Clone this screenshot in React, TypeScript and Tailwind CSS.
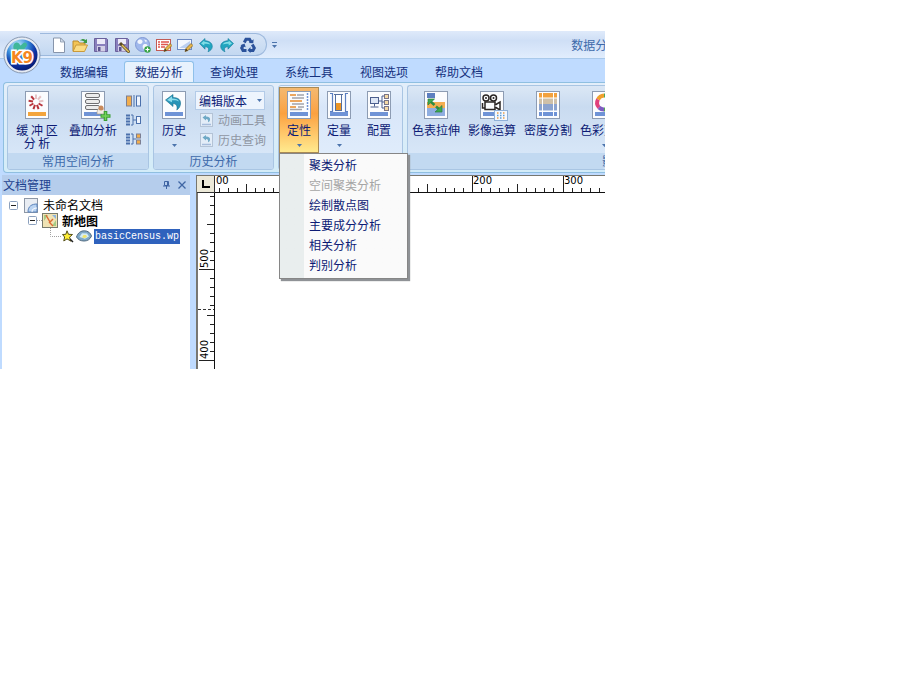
import React from 'react';

const tabs = ['数据编辑', '数据分析', '查询处理', '系统工具', '视图选项', '帮助文档'];

const menuItems = [
  { label: '聚类分析' },
  { label: '空间聚类分析', disabled: true },
  { label: '绘制散点图' },
  { label: '主要成分分析' },
  { label: '相关分析' },
  { label: '判别分析' },
];

/* ---------- quick access icons ---------- */

const FloppyShape = () => (
  <>
    <path d="M1.500 1.500h12l1 1v12h-13z" fill="#8a80bd" stroke="#6a619c" />
    <rect x="4" y="2" width="8" height="5" fill="#eceaf8" />
    <rect x="4" y="9" width="8" height="5.500" fill="#d3d0e6" />
    <rect x="5" y="10" width="2.500" height="4" fill="#5d5590" />
  </>
);

const Pencil = () => (
  <>
    <path d="M8 14.500l1-3 5-5 2 2-5 5z" fill="#e6b54a" stroke="#7b5b20" strokeWidth=".7" />
    <path d="M8 14.500l1-3 1.800 1.900z" fill="#4a3b20" />
  </>
);

const UndoShape = () => (
  <>
    <path
      d="M1.500 6.500L7 1.500v2.300c4.500 0 7.500 2.500 7.300 6-.2 2.300-1.800 4-4.300 5 1.300-2.800.5-5-3-5v2.400z"
      fill="#21a5bf"
      stroke="#157a9c"
      strokeWidth=".6"
    />
    <path d="M3 6.500l3.300-3v1.300c3.200 0 5 1 6 2.700-2-.8-4-1-6-.7v1.800z" fill="#7fdde6" />
  </>
);

const quickActions: { name: string; icon: React.ReactNode }[] = [
  {
    name: '新建',
    icon: (
      <>
        <path d="M2.500 1h7l4 4v10.500h-11z" fill="#fff" stroke="#8795ab" />
        <path d="M9.500 1v4h4z" fill="#d4deec" stroke="#8795ab" strokeWidth=".8" />
      </>
    ),
  },
  {
    name: '打开',
    icon: (
      <>
        <path d="M1 14V4h5l1.500 2H13v3" fill="#f3c455" stroke="#b98a2c" />
        <path d="M1 14.500l3-6.500h11.500l-3 6.500z" fill="#fbdc84" stroke="#c99a3c" />
        <path d="M8 3.500c2-2 4-2 5.500-.5l1.500-1v4h-4l1.300-1.200C11 3.600 9.800 3.500 8 3.500z" fill="#3d9a48" />
      </>
    ),
  },
  { name: '保存', icon: <FloppyShape /> },
  {
    name: '另存为',
    icon: (
      <>
        <FloppyShape />
        <path d="M6 6l9.500 9.500" stroke="#5b4a22" strokeWidth="3" />
        <path d="M8 8l7 7" stroke="#e2c25c" strokeWidth="1.500" />
      </>
    ),
  },
  {
    name: '网络',
    icon: (
      <>
        <circle cx="7.500" cy="7.500" r="7" fill="#a0b8ec" stroke="#8199d4" />
        <path d="M2.500 4c2-2.500 4.500-1.500 5 0s-1 3-2.500 3-3-1-2.500-3zm6 3.500c2-1 4 0 4 1s-2 4-3 4-3-3-1-5zM9 2.500l3 1-1 2z" fill="#f2f6fe" />
        <circle cx="12.500" cy="12.500" r="3.200" fill="#36a344" />
        <path d="M12.500 10.500v4M10.500 12.500h4" stroke="#fff" strokeWidth="1.200" />
      </>
    ),
  },
  {
    name: '编辑属性',
    icon: (
      <>
        <rect x=".5" y="2.500" width="14" height="11" fill="#fff" stroke="#c25b55" />
        <path d="M2 5h2m1 0h8M2 7.500h2m1 0h7M2 10h2m1 0h4" stroke="#e0564e" strokeWidth="1.500" />
        <Pencil />
      </>
    ),
  },
  {
    name: '编辑视图',
    icon: (
      <>
        <rect x=".5" y="2.500" width="14" height="10" fill="#f3f7fe" stroke="#6d8ac4" />
        <path d="M2 11l11-7v7z" fill="#bcd0f2" />
        <Pencil />
      </>
    ),
  },
  { name: '撤销', icon: <UndoShape /> },
  {
    name: '重做',
    icon: (
      <g transform="matrix(-1 0 0 1 16 0)">
        <UndoShape />
      </g>
    ),
  },
  {
    name: '刷新',
    icon: (
      <>
        <g fill="none" stroke="#2b529b" strokeWidth="3">
          <path d="M4.300 5.500L6 2.200h3.500l1.600 2.800" />
          <path d="M12.300 7.500l2 3.500-1.300 2.500H9.500" />
          <path d="M6.500 13.500H3L1.700 11l1.600-3" />
        </g>
        <path d="M8.800 6l4.500.2.300-4zM10.500 10v6l-3-2.800zM.5 8.500L4.500 6.500l1.200 3.800z" fill="#2b529b" />
      </>
    ),
  },
];

/* ---------- ribbon icons ---------- */

const FramedIcon: React.FC<{ children: React.ReactNode; bar?: string }> = ({ children, bar = '#6f93d6' }) => (
  <svg width="24" height="28" viewBox="0 0 24 28" className="shrink-0 overflow-visible" aria-hidden="true">
    <rect x=".5" y=".5" width="23" height="27" fill="#fbfcfe" stroke="#8d9cb3" />
    <rect x="3" y="21" width="18" height="4" fill={bar} />
    {children}
  </svg>
);

const spokes = [0, 40, 80, 120, 160, 200, 240, 280, 320];

const BufferIcon = () => (
  <FramedIcon bar="#f3a43c">
    {spokes.map((a, i) => (
      <path
        key={a}
        d="M11 8V3.500"
        transform={`rotate(${a} 11 11)`}
        stroke={i < 3 ? '#e6c3c5' : '#b8343c'}
        strokeWidth="2"
      />
    ))}
  </FramedIcon>
);

const OverlayIcon = () => (
  <FramedIcon>
    {[2, 8, 14].map((y) => (
      <rect key={y} x="4.500" y={y + 0.5} width="14" height="4" rx="1.500" fill="#ececec" stroke="#6f6f72" />
    ))}
    <path d="M16 23c0-4 1-6 4-6s4 2 4 6z" fill="#f1ece6" stroke="#a09080" strokeWidth=".6" />
    <circle cx="20" cy="17" r="2.500" fill="#c98a5c" />
    <path d="M24.500 20v10M19.500 25h10" stroke="#3a9e32" strokeWidth="3.600" />
    <path d="M24.500 21v8M20.500 25h8" stroke="#74d35c" strokeWidth="1.400" />
  </FramedIcon>
);

const HistoryIcon = () => (
  <FramedIcon>
    <path
      d="M3.500 9L11 3.500v3c5.500 0 8 2.800 7.500 6.500-.3 2.500-1.500 4.500-3.700 6 .9-3.800-.3-6.200-3.800-6.500v3z"
      fill="#2794b8"
      stroke="#17708f"
      strokeWidth=".6"
    />
    <path d="M5 9l5-3.700v2.200c4 0 6.300 1 7 3-2-1.200-4-1.500-7-1.200v2z" fill="#8bdcec" />
  </FramedIcon>
);

const QualitativeIcon = () => (
  <FramedIcon>
    <path d="M3 4h6M3 10h12M3 16h6" stroke="#e78a2c" strokeWidth="1.500" />
    <path d="M10 4h7M5 7h12M5 13h12M11 16h6M3 18.500h12" stroke="#a3a3aa" strokeWidth="1.500" />
    <path d="M20.500 2v18" stroke="#6f93d6" strokeWidth="1.500" strokeDasharray="2 1" />
  </FramedIcon>
);

const QuantitativeIcon = () => (
  <FramedIcon>
    <path d="M3 2.500h2.500v18H3M21 2.500h-2.500v18H21" stroke="#5b7fc0" strokeWidth="1.200" fill="none" />
    <rect x="8.500" y="3.500" width="6" height="16" fill="#fff" stroke="#56709f" />
    <rect x="9" y="12" width="5" height="7" fill="#eb9526" />
    <path d="M7 3.500h9" stroke="#56709f" />
  </FramedIcon>
);

const ConfigIcon = () => (
  <FramedIcon>
    <rect x="3.500" y="6.500" width="8" height="6" fill="#dde6f5" stroke="#4c5f8e" />
    <path d="M7.500 13v2.500M3.500 16h8M12 10h3M15 5v12M15 5h2M15 11h2M15 17h2" stroke="#4c5f8e" fill="none" />
    <rect x="17.500" y="3.500" width="4" height="4" fill="#f6d9a4" stroke="#7b7585" />
    <rect x="17.500" y="9.500" width="4" height="4" fill="#f6d9a4" stroke="#7b7585" />
    <rect x="17.500" y="15.500" width="4" height="4" fill="#f6d9a4" stroke="#7b7585" />
  </FramedIcon>
);

const StretchIcon = () => (
  <FramedIcon>
    <rect x="3" y="2" width="8" height="5" fill="#5c7fc0" />
    <rect x="3" y="11" width="18" height="6" fill="#f4ae52" />
    <rect x="3" y="17" width="18" height="8" fill="#8faee0" />
    <path d="M6.500 10.500l4 3.500M12 15.500l4 3.500" stroke="#2f8c43" strokeWidth="2.500" />
    <path d="M4 8h6.500L4 14zM18 14.500V21h-7z" fill="#3cab50" stroke="#2c7d3c" strokeWidth=".7" />
  </FramedIcon>
);

const ImageCalcIcon = () => (
  <FramedIcon>
    <g fill="#fbfcfe" stroke="#2b2624" strokeWidth="1.500">
      <circle cx="6" cy="7" r="3" />
      <circle cx="13.500" cy="7" r="3" />
      <rect x="5" y="11" width="10" height="7.500" />
      <path d="M15 14l5-3v8l-5-3" />
      <path d="M2.500 12v5H5" fill="none" />
    </g>
    <circle cx="6" cy="7" r="1" fill="#2b2624" />
    <circle cx="13.500" cy="7" r="1" fill="#2b2624" />
    <rect x="14.500" y="19.500" width="13" height="10" fill="#f5f9ff" stroke="#8fb0d8" />
    <path d="M17 22h1.500m4.500 0h1.500M17 27h1.500m4.500 0h1.500" stroke="#e9a04d" strokeWidth="1.500" />
    <path d="M20 22h1.500m-4.500 2.500h1.500m1.500 0h1.500m1.500 0h1.500M20 27h1.500" stroke="#5f9bd0" strokeWidth="1.500" />
  </FramedIcon>
);

const DensityIcon = () => (
  <FramedIcon>
    <rect x="3" y="2" width="18" height="5" fill="#f2a13d" />
    <rect x="3" y="7" width="18" height="6" fill="#cfc0a8" />
    <rect x="3" y="13" width="18" height="7" fill="#8ba3cf" />
    <path d="M6.500 2v23M17.500 2v23M3 7h18M3 20h18" stroke="#fff" />
  </FramedIcon>
);

const ColorIcon = () => (
  <FramedIcon>
    <path d="M12 4.500a7 7 0 0 0-6 4" stroke="#f0a02e" strokeWidth="4" fill="none" />
    <path d="M6 8.500a7 7 0 0 0 1 8" stroke="#e0407c" strokeWidth="4" fill="none" />
    <path d="M7 16.500a7 7 0 0 0 5 2" stroke="#7d5ac0" strokeWidth="4" fill="none" />
    <path d="M12 4.500a7 7 0 0 1 0 14" stroke="#4cab55" strokeWidth="4" fill="none" />
  </FramedIcon>
);

const SmallHistoryIcon = () => (
  <svg width="13" height="14" viewBox="0 0 13 14" className="shrink-0" aria-hidden="true">
    <rect x=".5" y=".5" width="12" height="13" fill="#e3edf8" stroke="#b4c3d6" />
    <path d="M2.500 4.500L6 2v1.500c3 0 4.500 1.500 4 3.500-.2 1.200-1 2-2 2.300.5-2 0-3.300-2-3.300v1.500z" fill="#6fa9c6" />
    <path d="M2 11.500h9" stroke="#a6bcdc" strokeWidth="1.500" />
  </svg>
);

const Caret: React.FC<{ className?: string }> = ({ className = '' }) => (
  <svg width="5" height="3" viewBox="0 0 5 3" className={`shrink-0 ${className}`} aria-hidden="true">
    <path d="M0 0h5L2.500 3z" fill="#4c74ac" />
  </svg>
);

/* ---------- ribbon pieces ---------- */

const RibbonButton: React.FC<{
  icon: React.ReactNode;
  label: React.ReactNode;
  caret?: boolean;
  active?: boolean;
  className?: string;
}> = ({ icon, label, caret, active, className = 'w-10' }) => (
  <button
    type="button"
    className={`flex h-full shrink-0 flex-col items-center border pt-[3px] leading-[13px] whitespace-nowrap ${
      active
        ? 'border-[#a98a55] bg-linear-to-b from-[#f4b970] via-[#fba13f] via-40% to-[#ffea8e]'
        : 'border-transparent'
    } ${className}`}
  >
    {icon}
    <span className="mt-1">{label}</span>
    {caret && <Caret className="mt-2" />}
  </button>
);

const RibbonGroup: React.FC<{
  title?: string;
  className: string;
  titleClass?: string;
  bodyClass?: string;
  children: React.ReactNode;
}> = ({
  title,
  className,
  titleClass = 'text-center bg-[#c2d9f1]',
  bodyClass = 'from-[#dbe7f5] via-[#c9dbf0] via-25% to-[#dceafa]',
  children,
}) => (
  <section className={`flex flex-col rounded-[3px] border border-[#a9c5e3] bg-linear-to-b pt-px ${bodyClass} ${className}`}>
    <div className="flex h-[66px]">{children}</div>
    <div className={`h-4 rounded-b-[2px] leading-4 whitespace-nowrap text-[#3e6aaa] ${titleClass}`}>
      {title && <h2>{title}</h2>}
    </div>
  </section>
);

/* ---------- rulers ---------- */

const UNIT = 9.05;

const HorizontalRuler = () => {
  // k = 0 is the "200" mark, measured from the left edge of the canvas
  const ticks = Array.from({ length: 110 }, (_, i) => i - 28);
  return (
    <svg width="100%" height="17" className="block" fontFamily="DejaVu Sans, sans-serif" fontSize="10">
      {ticks.map((k) => {
        const x = Math.round(257 + k * UNIT) + 0.5;
        const top = k % 10 === 0 ? 0 : k % 5 === 0 ? 8 : 12;
        return <path key={k} d={`M${x} ${top}V16`} stroke="#222" />;
      })}
      <text x="1" y="8">00</text>
      <text x="258" y="8">200</text>
      <text x="349" y="8">300</text>
      <rect y="16" width="100%" height="1" fill="#111" />
    </svg>
  );
};

const VerticalRuler = () => {
  const ticks = Array.from({ length: 19 }, (_, i) => i - 8);
  return (
    <svg width="18" height="176" className="block shrink-0" fontFamily="DejaVu Sans, sans-serif" fontSize="10">
      {ticks.map((k) => {
        const y = Math.round(76 + k * 9.1) + 0.5;
        const left = k % 10 === 0 ? 2 : k % 5 === 0 ? 10 : 13;
        return <path key={k} d={`M${left} ${y}H17`} stroke="#222" />;
      })}
      <path d="M1 116.500h16" stroke="#333" strokeDasharray="3 2" />
      <text transform="translate(11 75) rotate(-90)">500</text>
      <text transform="translate(11 166) rotate(-90)">400</text>
      <rect x="17" width="1" height="176" fill="#111" />
      <rect width="1" height="176" fill="#777" />
    </svg>
  );
};

const Collapse = () => (
  <svg width="9" height="9" viewBox="0 0 9 9" className="shrink-0" aria-hidden="true">
    <rect x=".5" y=".5" width="8" height="8" rx="1" fill="#fff" stroke="#8ba0bd" />
    <path d="M2 4.500h5" stroke="#222" />
  </svg>
);

const DocumentTree = () => (
  <ul className="flex-1 bg-white pt-0.5 text-black">
    <li>
      <div className="flex h-4 items-center pl-[7px]">
        <Collapse />
        <svg width="14" height="15" viewBox="0 0 14 15" className="ml-1.5 shrink-0" aria-hidden="true">
          <rect x=".5" y=".5" width="13" height="14" fill="#e9edf3" stroke="#8d97a6" />
          <path d="M4 14c0-6 4-8 9-8v8z" fill="#b9d3f2" stroke="#5b83bb" />
          <path d="M8 14c0-3 2-4 5-4" fill="none" stroke="#fff" />
        </svg>
        <span className="ml-[5px]">未命名文档</span>
      </div>
      <ul>
        <li>
          <div className="flex h-[15px] items-center pl-[26px] font-bold">
            <Collapse />
            <svg width="5" height="1" viewBox="0 0 5 1" className="shrink-0" aria-hidden="true">
              <path d="M0 .5h5" stroke="#a0a0a0" strokeDasharray="1 1" />
            </svg>
            <svg width="16" height="15" viewBox="0 0 16 15" className="shrink-0" aria-hidden="true">
              <rect x=".5" y=".5" width="15" height="14" fill="#f0e3b4" stroke="#777a6c" />
              <path d="M2 2h4l-4 6zM10 13l4-6v6z" fill="#a5cc85" />
              <path d="M4 2l4 7 3-3M7 9l4 4" stroke="#dc6b35" strokeWidth="1.400" fill="none" />
              <path d="M10 2h4v4z" fill="#8db5de" />
            </svg>
            <span className="ml-1">新地图</span>
          </div>
          <ul>
            <li className="flex h-4 items-center pl-12">
              <svg width="12" height="16" viewBox="0 0 12 16" className="shrink-0" aria-hidden="true">
                <path d="M.5 0v8.500H12" fill="none" stroke="#a0a0a0" strokeDasharray="1 1" />
              </svg>
              <svg width="12" height="13" viewBox="0 0 12 13" className="shrink-0" aria-hidden="true">
                <path d="M5 .8l1.500 3.500 4 .2-3 2.700 1.500 4-4-2.300L1.800 11l.8-4L.5 4.500l3.300-.2z" fill="#ffee35" stroke="#55501c" />
                <path d="M8 9l3 3" stroke="#222" strokeWidth="1.500" />
              </svg>
              <svg width="16" height="12" viewBox="0 0 16 12" className="ml-0.5 shrink-0" aria-hidden="true">
                <path d="M.5 7C2 2.500 5 .8 8.500.8S14.500 3 15.500 6c-1.500 3.500-4 5-7.500 5S2 9.500.5 7z" fill="#7fa9c8" stroke="#516a80" />
                <path d="M3.500 7l2.500-3.800 5 .3 2 3-4 2.300z" fill="#d5ecf5" />
                <path d="M6 7.500l1.500-2.500h2.500l1 1.800-2 1.200z" fill="#eee36c" />
              </svg>
              <a
                href="#basicCensus"
                className="ml-0.5 h-[15px] bg-[#2f62bd] px-px font-['Liberation_Mono',monospace] text-[10px] leading-[15px] text-white"
              >
                basicCensus.wp
              </a>
            </li>
          </ul>
        </li>
      </ul>
    </li>
  </ul>
);

const App: React.FC = () => (
  <div className="min-h-screen bg-white pt-[31px] font-['Noto_Sans_CJK_SC','Liberation_Sans',sans-serif] text-xs text-[#15317e]">
    <main className="relative w-[65.8%] overflow-hidden bg-[#bfdbff]">
      {/* Title bar */}
      <header className="flex h-7 items-stretch justify-between border-b border-[#a9c9ea] bg-linear-to-b from-[#dfeafa] via-[#cfdff6] via-35% to-[#e1edfd]">
        <div className="flex items-center">
          <div className="ml-10 flex h-[23px] items-center rounded-r-full border border-l-0 border-[#9db9dd] bg-linear-to-b from-[#d8e5f6] to-[#c3d8f1] pr-2 pl-2">
            {quickActions.map((a) => (
              <button key={a.name} type="button" aria-label={a.name} className="flex h-5 w-[21px] items-center justify-center">
                <svg width="16" height="16" viewBox="0 0 16 16" aria-hidden="true">{a.icon}</svg>
              </button>
            ))}
          </div>
          <button type="button" aria-label="自定义快速访问工具栏" className="ml-[5px] flex flex-col items-center gap-0.5">
            <span className="h-px w-[5px] bg-[#4c74ac]" />
            <Caret />
          </button>
        </div>
        <h1 className="w-[34px] overflow-hidden leading-7 whitespace-nowrap text-[#3e6aaa]">数据分析</h1>
      </header>

      {/* Application button, overlaps the title bar and tab row */}
      <button type="button" aria-label="主菜单" className="absolute top-[5px] left-[3px]">
        <svg width="38" height="38" viewBox="0 0 38 38">
          <defs>
            <radialGradient id="globe" cx=".35" cy=".2" r=".85">
              <stop offset="0" stopColor="#c9f0fc" />
              <stop offset=".4" stopColor="#3a8fdc" />
              <stop offset=".7" stopColor="#0c32a4" />
              <stop offset="1" stopColor="#061a70" />
            </radialGradient>
          </defs>
          <circle cx="19" cy="19" r="18" fill="#e6ebf3" stroke="#8798b0" />
          <circle cx="19" cy="19" r="15.500" fill="url(#globe)" />
          <path d="M11 8c3-3 5-1 6 1s3-4 6-2-1 4-2 7-3 1-5 3-4-1-5-3-1-4 0-6z" fill="#3fb79a" />
          <text
            x="19"
            y="27"
            textAnchor="middle"
            fontFamily="DejaVu Sans, sans-serif"
            fontSize="15"
            fontWeight="bold"
            fill="#f5871f"
            stroke="#fff"
            strokeWidth="3"
            paintOrder="stroke"
          >
            K9
          </text>
        </svg>
      </button>

      {/* Tabs */}
      <nav className="flex h-[23px] items-end gap-[5px] pl-[49px]">
        {tabs.map((t, i) => (
          <button
            key={t}
            type="button"
            className={`h-[21px] w-[70px] shrink-0 text-center leading-5 ${
              i === 1 ? 'rounded-t-[3px] border border-b-0 border-[#8fc0ea] bg-[#e8f2fd]' : ''
            }`}
          >
            {t}
          </button>
        ))}
      </nav>

      {/* Ribbon */}
      <div className="ml-[3px] flex gap-1 rounded-l-[4px] border border-r-0 border-[#8fbfe0] bg-linear-to-b from-[#e3eefa] to-[#d3ecf8] py-0.5 pl-[3px] text-[#0d1b75]">
        <RibbonGroup title="常用空间分析" className="w-[142px] shrink-0">
          <RibbonButton
            className="w-[58px]"
            icon={<BufferIcon />}
            label={
              <>
                缓 冲 区<br />分 析
              </>
            }
          />
          <RibbonButton className="w-[54px]" icon={<OverlayIcon />} label="叠加分析" />
          <div className="flex flex-col gap-[7px] pt-2 pl-1.5">
            <button type="button" aria-label="分割">
              <svg width="15" height="12" viewBox="0 0 15 12" className="block">
                <rect x=".5" y="1" width="5" height="10" fill="#f2ad4c" stroke="#7c7f93" />
                <path d="M8 0v12" stroke="#4b70ac" />
                <rect x="10.500" y="1" width="4" height="10" fill="#eef4fd" stroke="#4b70ac" />
              </svg>
            </button>
            <button type="button" aria-label="合并">
              <svg width="15" height="12" viewBox="0 0 15 12" className="block">
                <path d="M0 1.500h4M0 4.500h4M0 7.500h4M0 10.500h4" stroke="#4b70ac" strokeWidth="1.800" />
                <path d="M5 1h2v10H5M7 6h3" stroke="#4b70ac" fill="none" />
                <rect x="10.500" y="2.500" width="4" height="7" fill="#eef4fd" stroke="#4b70ac" />
              </svg>
            </button>
            <button type="button" aria-label="拆分">
              <svg width="15" height="12" viewBox="0 0 15 12" className="block">
                <path d="M0 1.500h4M0 4.500h4M0 7.500h4M0 10.500h4" stroke="#4b70ac" strokeWidth="1.800" />
                <path d="M5 1h2v10H5M7 6h3" stroke="#4b70ac" fill="none" />
                <rect x="10.500" y="1" width="4" height="4" fill="#f2ad4c" stroke="#7c7f93" />
                <rect x="10.500" y="7" width="4" height="4" fill="#f2ad4c" stroke="#7c7f93" />
              </svg>
            </button>
          </div>
        </RibbonGroup>

        <RibbonGroup title="历史分析" className="w-[121px] shrink-0">
          <RibbonButton icon={<HistoryIcon />} label="历史" caret />
          <div className="flex flex-col pt-1 pl-px">
            <div className="relative flex h-[19px] items-center">
              <select
                aria-label="版本"
                className="h-[19px] w-[70px] appearance-none border border-[#b3cbe8] bg-[#edf4fd] pl-[3px] text-xs leading-4"
              >
                <option>编辑版本</option>
              </select>
              <Caret className="pointer-events-none absolute right-1" />
            </div>
            <button type="button" disabled className="flex h-5 items-center gap-[5px] pl-[5px] text-[#8f96a3]">
              <SmallHistoryIcon />
              动画工具
            </button>
            <button type="button" disabled className="flex h-5 items-center gap-[5px] pl-[5px] text-[#8f96a3]">
              <SmallHistoryIcon />
              历史查询
            </button>
          </div>
        </RibbonGroup>

        <RibbonGroup
          className="w-[125px] shrink-0"
          titleClass="bg-[#cfe2f8]"
          bodyClass="from-[#e8f1fc] via-[#d8e6f9] via-25% to-[#e2eefc]"
        >
          <div className="relative">
            <RibbonButton icon={<QualitativeIcon />} label="定性" caret active />
            <ul className="absolute top-full left-0 z-10 w-[129px] border border-[#868686] bg-[#fafafa] bg-linear-to-r from-[#e9eeee] from-[24px] to-[#fafafa] to-[24px] pt-px pb-[3px] shadow-[2px_2px_1px_#8f9296]">
              {menuItems.map((m) => (
                <li key={m.label}>
                  <button
                    type="button"
                    disabled={m.disabled}
                    className="block h-5 w-full pl-[29px] text-left leading-5 disabled:text-[#a5a5a5]"
                  >
                    {m.label}
                  </button>
                </li>
              ))}
            </ul>
          </div>
          <RibbonButton icon={<QuantitativeIcon />} label="定量" caret />
          <RibbonButton icon={<ConfigIcon />} label="配置" />
        </RibbonGroup>

        <RibbonGroup
          title="影像分析"
          titleClass="bg-[#c2d9f1] pl-[194px]"
          className="min-w-0 flex-1 overflow-hidden rounded-r-none border-r-0"
        >
          <RibbonButton className="w-14" icon={<StretchIcon />} label="色表拉伸" />
          <RibbonButton className="w-14" icon={<ImageCalcIcon />} label="影像运算" />
          <RibbonButton className="w-14" icon={<DensityIcon />} label="密度分割" />
          <RibbonButton className="w-14" icon={<ColorIcon />} label="色彩变换" caret />
        </RibbonGroup>
      </div>

      {/* Workspace */}
      <div className="flex pt-0.5">
        <aside className="ml-0.5 flex w-[188px] shrink-0 flex-col">
          <div className="flex h-5 items-center bg-[#b5cdec] pr-1 pl-px">
            <h2 className="flex-1 leading-4 text-[#1d4290]">文档管理</h2>
            <button type="button" aria-label="固定" className="mr-2">
              <svg width="7" height="8" viewBox="0 0 7 8" className="block">
                <path d="M1.500.5h4v4h-4zM0 5h7M3.500 5v3M4.500 1v3" stroke="#3f65a3" fill="none" />
              </svg>
            </button>
            <button type="button" aria-label="关闭">
              <svg width="8" height="8" viewBox="0 0 8 8" className="block">
                <path d="M.5.5l7 7M7.500.5l-7 7" stroke="#3f65a3" strokeWidth="1.300" />
              </svg>
            </button>
          </div>
          <DocumentTree />
        </aside>
        <section className="ml-1.5 min-w-0 flex-1 border-t border-l border-[#77776f] bg-white">
          <div className="flex">
            <div className="flex h-[17px] w-[18px] shrink-0 items-center justify-center border-r border-b border-[#333] bg-[#ece9d8]">
              <svg width="8" height="8" viewBox="0 0 8 8">
                <path d="M1 0v7h7" stroke="#000" strokeWidth="2" fill="none" />
              </svg>
            </div>
            <div className="min-w-0 flex-1">
              <HorizontalRuler />
            </div>
          </div>
          <VerticalRuler />
        </section>
      </div>
    </main>
  </div>
);

export default App;
